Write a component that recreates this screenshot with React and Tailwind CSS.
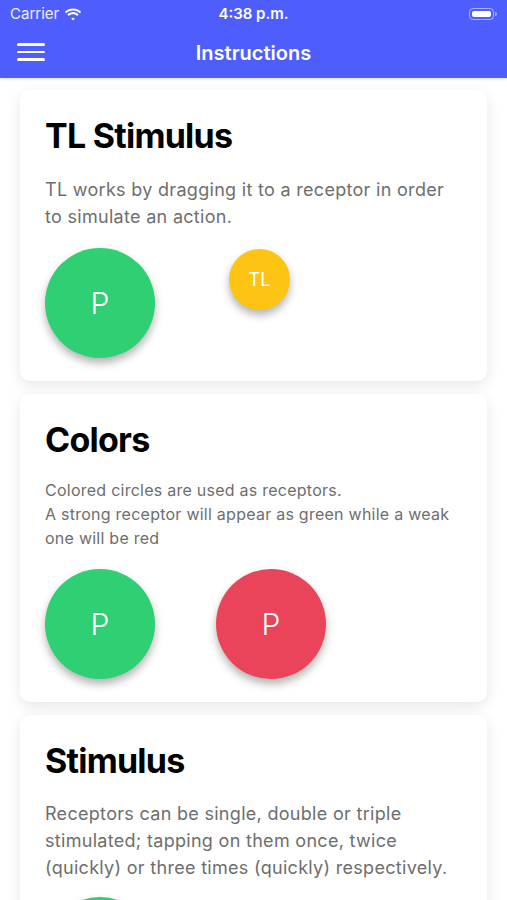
import React from "react";

const Receptor = ({ label, color, size = "big", className = "" }) => {
  const big = size === "big";
  return (
    <div
      className={`${big ? "w-[110px] h-[110px] text-[30px] font-light" : "w-[61px] h-[61px] text-[18px]"} ${color} rounded-full flex items-center justify-center text-white shadow-[0_5px_8px_rgba(0,0,0,0.3)] shrink-0 ${className}`}
    >
      {label}
    </div>
  );
};

const Card = ({ title, children }) => (
  <div className="bg-white rounded-[10px] mx-5 px-[25px] pt-[25px] pb-[23px] shadow-[0_4px_14px_rgba(0,0,0,0.1)]">
    <h2 className="text-[34px] leading-[41px] font-bold text-black tracking-[-0.75px]">{title}</h2>
    {children}
  </div>
);

export default function App() {
  return (
    <div className="w-[507px] h-[900px] overflow-hidden bg-white" style={{ fontFamily: "Inter, 'Noto Sans', sans-serif" }}>
      {/* Header */}
      <div className="bg-[#4e5efc] text-white shadow-[0_1px_3px_rgba(0,0,0,0.15)] relative z-10">
        <div className="h-[28px] flex items-center justify-between px-[10px]">
          <div className="flex items-center gap-[5px] w-[120px]">
            <span className="text-[15px] text-white/90">Carrier</span>
            <svg width="18" height="13" viewBox="0 0 18 13" fill="white">
              <path d="M9 2.5c2.6 0 5 1 6.8 2.7l1.4-1.5C15 1.6 12.1.4 9 .4S3 1.6.8 3.7l1.4 1.5C4 3.5 6.4 2.5 9 2.5z" />
              <path d="M9 6.2c1.6 0 3.1.6 4.2 1.7l1.4-1.5C13.1 5 11.1 4.1 9 4.1S4.9 5 3.4 6.4l1.4 1.5C5.9 6.8 7.4 6.2 9 6.2z" />
              <path d="M9 9.7c.7 0 1.3.3 1.8.7L9 12.4 7.2 10.4c.5-.4 1.1-.7 1.8-.7z" />
            </svg>
          </div>
          <span className="text-[15px] font-semibold">4:38 p.m.</span>
          <div className="w-[120px] flex justify-end items-center">
            <div className="w-[25px] h-[12px] rounded-[4px] border border-white/50 p-[2px]">
              <div className="w-full h-full bg-white rounded-[2px]" />
            </div>
            <div className="w-[2px] h-[4px] bg-white/50 rounded-r-sm ml-[1px]" />
          </div>
        </div>
        <div className="h-[50px] flex items-center relative">
          <button className="absolute left-[17px] top-[15px] flex flex-col gap-[5px]">
            <span className="block w-[28px] h-[2.5px] bg-white rounded" />
            <span className="block w-[28px] h-[2.5px] bg-white rounded" />
            <span className="block w-[28px] h-[2.5px] bg-white rounded" />
          </button>
          <h1 className="w-full text-center text-[20px] font-semibold">Instructions</h1>
        </div>
      </div>

      <div className="flex flex-col gap-[13px] pt-[12px]">
        <Card title="TL Stimulus">
          <p className="mt-5 text-[18px] leading-[27px] tracking-[0.3px] text-[#6e6e6e]">
            TL works by dragging it to a receptor in order to simulate an action.
          </p>
          <div className="mt-[18px] flex items-start">
            <Receptor label="P" color="bg-[#2fcf73]" />
            <Receptor label="TL" color="bg-[#fdc414]" size="small" className="ml-[74px] mt-[1px]" />
          </div>
        </Card>

        <Card title="Colors">
          <p className="mt-[18px] text-[16px] leading-[24px] tracking-[0.25px] text-[#6e6e6e]">
            Colored circles are used as receptors.
            <br />
            A strong receptor will appear as green while a weak one will be red
          </p>
          <div className="mt-[19px] flex items-start">
            <Receptor label="P" color="bg-[#2fcf73]" />
            <Receptor label="P" color="bg-[#e9445a]" className="ml-[61px]" />
          </div>
        </Card>

        <Card title="Stimulus">
          <p className="mt-[19px] text-[18px] leading-[27px] tracking-[0.3px] text-[#6e6e6e]">
            Receptors can be single, double or triple stimulated; tapping on them once, twice (quickly) or three times (quickly) respectively.
          </p>
          <div className="mt-[16px] flex items-start">
            <Receptor label="P" color="bg-[#2fcf73]" />
          </div>
        </Card>
      </div>
    </div>
  );
}
